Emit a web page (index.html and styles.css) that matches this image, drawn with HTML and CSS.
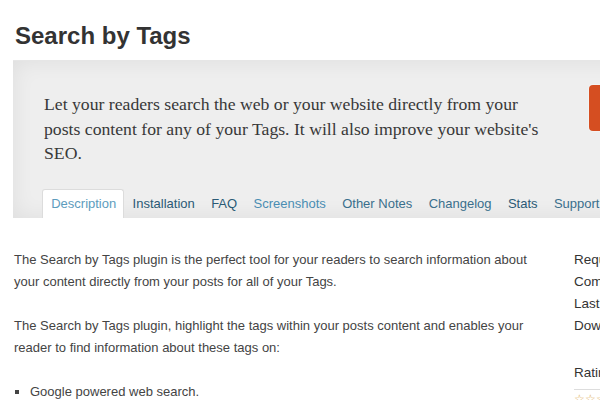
FILE: index.html
```html
<!DOCTYPE html>
<html lang="en">
<head>
  <meta charset="UTF-8" />
  <title>Search by Tags</title>
  <link rel="stylesheet" href="styles.css">
</head>
<body>

<h2 class="title">Search by Tags</h2>

<div class="plugin-head">
  <div class="head-row">
    <p class="summary">Let your readers search the web or your website directly from your posts content for any of your Tags. It will also improve your website's SEO.</p>
    <span class="download"></span>
  </div>
  <ul class="tabs">
    <li class="current"><a href="#">Description</a></li>
    <li><a href="#" class="dark">Installation</a></li>
    <li><a href="#" class="dark">FAQ</a></li>
    <li><a href="#" class="light">Screenshots</a></li>
    <li><a href="#">Other Notes</a></li>
    <li><a href="#">Changelog</a></li>
    <li><a href="#" class="dark">Stats</a></li>
    <li><a href="#">Support</a></li>
  </ul>
</div>

<div class="page">
  <div class="content">
    <p>The Search by Tags plugin is the perfect tool for your readers to search information about your content directly from your posts for all of your Tags.</p>
    <p>The Search by Tags plugin, highlight the tags within your posts content and enables your reader to find information about these tags on:</p>
    <ul>
      <li>Google powered web search.</li>
    </ul>
  </div>
  <div class="sidebar">
    <ul class="meta">
      <li>Requires: 2.0.2 or higher</li>
      <li>Compatible up to: 3.0.5</li>
      <li>Last Updated: 2011-2-1</li>
      <li>Downloads: 2,381</li>
    </ul>
    <h4>Ratings</h4>
    <div class="stars">&#9734;&#9734;&#9734;</div>
  </div>
</div>

</body>
</html>
```

FILE: styles.css
```css
body {
  margin: 0;
  font-family: "Liberation Sans", Arial, sans-serif;
  color: #333;
  background: #fff;
  overflow: hidden;
}

.title {
  margin: 0;
  padding: 22px 0 0 15px;
  height: 38px;
  font-size: 24px;
  font-weight: bold;
  color: #333;
}

.plugin-head {
  margin-left: 13px;
  background: #eee;
  box-shadow: inset 0 0 22px rgba(0,0,0,0.07);
  border-top: 1px solid #e6e6e6;
  padding-top: 31px;
  width: 700px;
}

.head-row {
  display: flex;
  align-items: flex-start;
}

.summary {
  margin: 0 0 0 31px;
  width: 505px;
  flex-shrink: 0;
  font-family: Georgia, "Liberation Serif", serif;
  font-size: 17.7px;
  line-height: 24.5px;
  color: #383838;
}

.download {
  margin: -7px 0 0 40px;
  width: 80px;
  height: 46px;
  background: #d54e21;
  border-radius: 4px;
  box-shadow: 0 0 0 1px #f3f3f3;
}

.tabs {
  list-style: none;
  margin: 23px 0 0 29px;
  padding: 0;
  display: flex;
}

.tabs li a {
  display: block;
  padding: 6px 7.2px 7px 7.2px;
  font-size: 13px;
  color: #3a6f8c;
  text-decoration: none;
  border: 1px solid transparent;
  border-bottom: none;
}

.tabs li a.dark {
  color: #2a5a75;
}

.tabs li a.light {
  color: #4a8db3;
}

.tabs li.current a {
  padding-left: 8.2px;
  background: #fff;
  border-color: #dcdcdc;
  border-radius: 3px 3px 0 0;
  color: #5d9cbd;
}

.page {
  display: flex;
  padding: 31px 0 0 14px;
}

.content {
  width: 530px;
  flex-shrink: 0;
  font-size: 13px;
  line-height: 22px;
  color: #444;
}

.content p {
  margin: 0 0 22px 0;
}

.content ul {
  margin: 0;
  padding-left: 16px;
  list-style: square;
}

.sidebar {
  margin-left: 30px;
  font-size: 13.5px;
  white-space: nowrap;
}

.meta {
  list-style: none;
  margin: 0;
  padding: 0;
  line-height: 22px;
}

.sidebar h4 {
  margin: 28px 0 0 0;
  font-size: 13.5px;
  font-weight: normal;
  padding-bottom: 9px;
  border-bottom: 1px solid #ddd;
}

.stars {
  margin-top: 2px;
  color: #e0b060;
  font-size: 12px;
}
```
